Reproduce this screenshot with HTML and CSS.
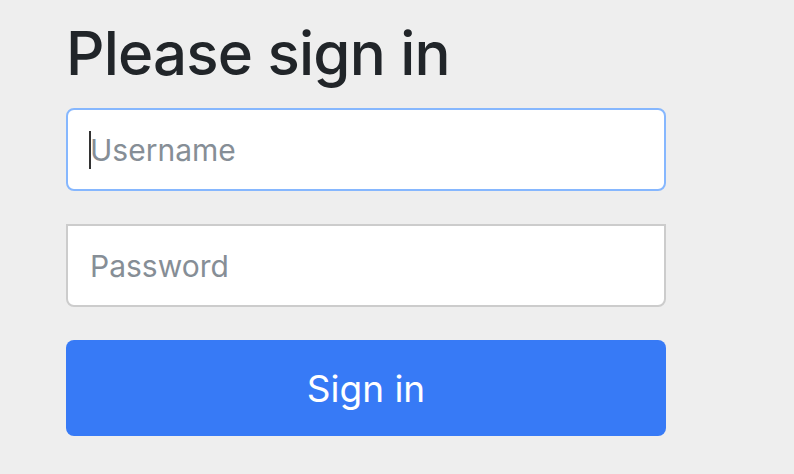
FILE: index.html
```html
<!DOCTYPE html>
<html lang="en">
<head>
    <meta charset="UTF-8">
    <meta name="viewport" content="width=device-width, initial-scale=1.0">
    <title>Please sign in</title>
    <link rel="stylesheet" href="styles.css">
</head>
<body>
    <form class="form-signin" method="post" action="/login">
        <h2 class="form-signin-heading">Please sign in</h2>
        <p class="field field-first">
            <input type="text" id="username" name="username" class="form-control is-focused" placeholder="Username">
            <span class="caret"></span>
        </p>
        <p class="field">
            <input type="password" id="password" name="password" class="form-control field-last" placeholder="Password">
        </p>
        <button class="btn-signin" type="submit">Sign in</button>
    </form>
</body>
</html>
```

FILE: styles.css
```css
body {
    margin: 0;
    background: #eeeeee;
    font-family: Inter, "Liberation Sans", sans-serif;
    color: #212529;
}

.form-signin {
    width: 600px;
    padding: 17px 0 0 66px;
}

.form-signin-heading {
    margin: 0 0 19px;
    font-size: 60px;
    font-weight: 500;
    line-height: 1.2;
    letter-spacing: -0.8px;
}

.field {
    position: relative;
    margin: 0 0 33px;
}

.form-control {
    display: block;
    box-sizing: border-box;
    width: 100%;
    height: 83px;
    padding: 0 22px;
    font-family: inherit;
    font-size: 30px;
    color: #495057;
    background: #fff;
    border: 2px solid #cccccc;
    border-radius: 0 0 8px 8px;
    outline: none;
}

.form-control::placeholder {
    color: #868e96;
}

.form-control.is-focused {
    border-color: #86b7fe;
    border-radius: 8px;
}

.caret {
    position: absolute;
    left: 23px;
    top: 23px;
    width: 2px;
    height: 38px;
    background: #333;
}

.btn-signin {
    display: block;
    width: 100%;
    height: 96px;
    font-family: inherit;
    font-size: 37px;
    color: #fff;
    background: #377af6;
    border: none;
    border-radius: 8px;
    cursor: pointer;
}
```
